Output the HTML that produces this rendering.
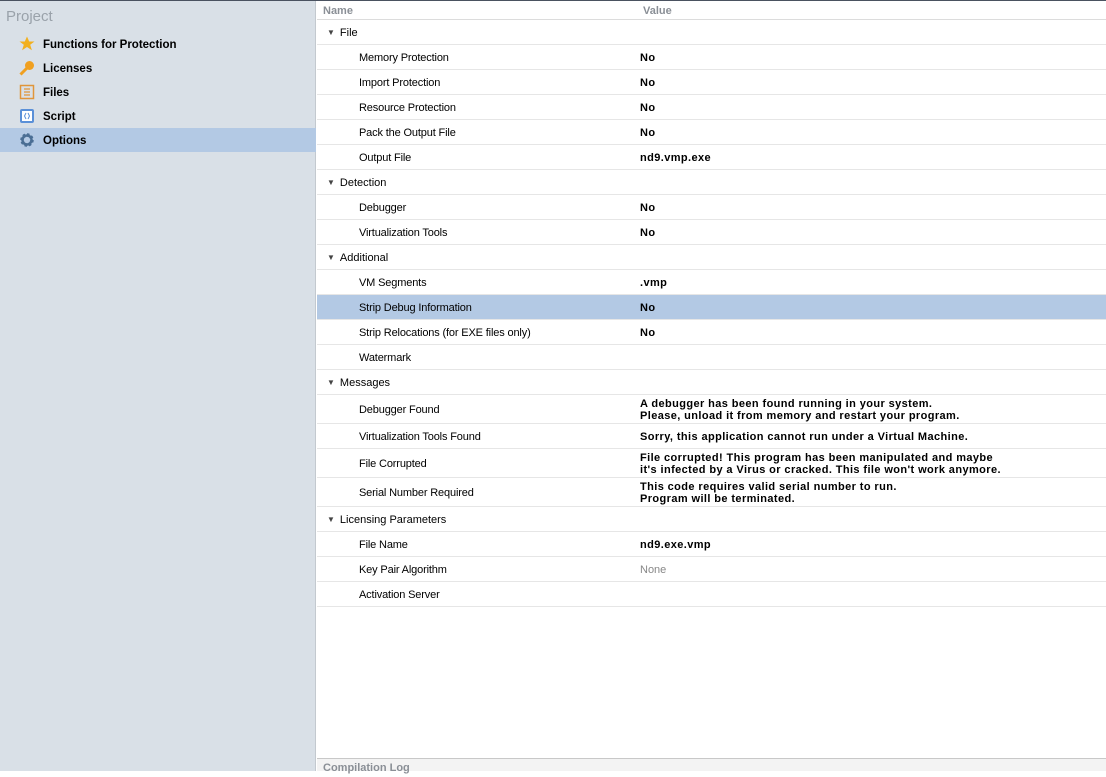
<!DOCTYPE html>
<html><head><style>
*{margin:0;padding:0;box-sizing:border-box}
body{width:1106px;height:771px;overflow:hidden;font-family:"Liberation Sans",sans-serif;font-size:11px;color:#000;background:#fff;position:relative}
#top{position:absolute;left:0;top:0;width:1106px;height:1px;background:#4a5260}
#left{position:absolute;left:0;top:1px;width:316px;height:770px;background:#d9e0e7;border-right:1px solid #c3c9cf}
#left .t{position:absolute;left:6px;top:7px;font-size:15px;color:#9aa2aa;font-family:"Liberation Sans",sans-serif}
.it{position:absolute;left:0;width:316px;height:24px;font-weight:bold;font-size:11.5px;line-height:26px;padding-left:43px}
.it svg{position:absolute;left:19px;top:4px}
.sel{background:#b3c9e4}
#right{position:absolute;left:317px;top:1px;width:789px;height:757px}
.hdr{position:absolute;top:0;left:0;width:789px;height:19px;border-bottom:1px solid #dcdcdc;color:#8a8f96;font-weight:bold;font-size:11px;line-height:20px}
.row{position:absolute;left:0;width:789px;border-bottom:1px solid #e6e6e6;line-height:12px}
.row .n{position:absolute;left:42px;top:1px;height:100%;display:flex;align-items:center;letter-spacing:-0.15px}
.row .v{position:absolute;left:323px;top:1px;height:100%;display:flex;align-items:center;font-weight:bold;line-height:12px;letter-spacing:0.4px}
.row .g{position:absolute;left:10px;top:1px;height:100%;display:flex;align-items:center}
.row .g b{font-weight:normal;font-size:8px;color:#444;margin-right:5px}
#bot{position:absolute;left:317px;top:758px;width:789px;height:13px;background:#f3f3f3;border-top:1px solid #c8c8c8;color:#8a8f96;font-weight:bold;font-size:11px;padding-left:6px;line-height:18px}
</style></head><body>
<div id="top"></div>
<div id="left">
<div class="t">Project</div>
<div class="it" style="top:31px"><svg width="16" height="16" viewBox="0 0 16 16"><path d="M8 0.5l2.2 5h5.3l-4.3 3.3 1.7 5.5L8 11l-4.9 3.3 1.7-5.5L0.5 5.5h5.3z" fill="#f2b01e"/></svg>Functions for Protection</div>
<div class="it" style="top:55px"><svg width="16" height="16" viewBox="0 0 16 16"><circle cx="10.5" cy="5.5" r="4.5" fill="#f0a020"/><path d="M8 8L1.5 14.5" stroke="#f0a020" stroke-width="3"/></svg>Licenses</div>
<div class="it" style="top:79px"><svg width="16" height="16" viewBox="0 0 16 16"><rect x="1.5" y="1.5" width="13" height="13" fill="none" stroke="#e0953a" stroke-width="1.5"/><path d="M5 5h6M5 8h6M5 11h6" stroke="#e0953a" stroke-width="1.3"/></svg>Files</div>
<div class="it" style="top:103px"><svg width="16" height="16" viewBox="0 0 16 16"><rect x="1" y="1" width="14" height="14" rx="2" fill="#5a90d8"/><rect x="3" y="3" width="10" height="10" fill="#fff"/><path d="M7 5L5.5 8 7 11M9 5l1.5 3L9 11" stroke="#5a90d8" fill="none"/></svg>Script</div>
<div class="it sel" style="top:127px"><svg width="16" height="16" viewBox="0 0 16 16"><circle cx="8" cy="8" r="5" fill="none" stroke="#4a6e94" stroke-width="3.5" stroke-dasharray="2.2 1.7"/><circle cx="8" cy="8" r="4.5" fill="none" stroke="#4a6e94" stroke-width="2.5"/></svg>Options</div>
</div>
<div id="right">
<div class="hdr"><span style="position:absolute;left:6px">Name</span><span style="position:absolute;left:326px">Value</span></div>
<div class="row" style="top:19px;height:25px"><div class="g"><b>▼</b>File</div></div>
<div class="row" style="top:44px;height:25px"><div class="n">Memory Protection</div><div class="v">No</div></div>
<div class="row" style="top:69px;height:25px"><div class="n">Import Protection</div><div class="v">No</div></div>
<div class="row" style="top:94px;height:25px"><div class="n">Resource Protection</div><div class="v">No</div></div>
<div class="row" style="top:119px;height:25px"><div class="n">Pack the Output File</div><div class="v">No</div></div>
<div class="row" style="top:144px;height:25px"><div class="n">Output File</div><div class="v">nd9.vmp.exe</div></div>
<div class="row" style="top:169px;height:25px"><div class="g"><b>▼</b>Detection</div></div>
<div class="row" style="top:194px;height:25px"><div class="n">Debugger</div><div class="v">No</div></div>
<div class="row" style="top:219px;height:25px"><div class="n">Virtualization Tools</div><div class="v">No</div></div>
<div class="row" style="top:244px;height:25px"><div class="g"><b>▼</b>Additional</div></div>
<div class="row" style="top:269px;height:25px"><div class="n">VM Segments</div><div class="v">.vmp</div></div>
<div class="row sel" style="top:294px;height:25px"><div class="n">Strip Debug Information</div><div class="v">No</div></div>
<div class="row" style="top:319px;height:25px"><div class="n">Strip Relocations (for EXE files only)</div><div class="v">No</div></div>
<div class="row" style="top:344px;height:25px"><div class="n">Watermark</div></div>
<div class="row" style="top:369px;height:25px"><div class="g"><b>▼</b>Messages</div></div>
<div class="row" style="top:394px;height:29px"><div class="n">Debugger Found</div><div class="v">A debugger has been found running in your system.<br>Please, unload it from memory and restart your program.</div></div>
<div class="row" style="top:423px;height:25px"><div class="n">Virtualization Tools Found</div><div class="v">Sorry, this application cannot run under a Virtual Machine.</div></div>
<div class="row" style="top:448px;height:29px"><div class="n">File Corrupted</div><div class="v">File corrupted! This program has been manipulated and maybe<br>it's infected by a Virus or cracked. This file won't work anymore.</div></div>
<div class="row" style="top:477px;height:29px"><div class="n">Serial Number Required</div><div class="v">This code requires valid serial number to run.<br>Program will be terminated.</div></div>
<div class="row" style="top:506px;height:25px"><div class="g"><b>▼</b>Licensing Parameters</div></div>
<div class="row" style="top:531px;height:25px"><div class="n">File Name</div><div class="v">nd9.exe.vmp</div></div>
<div class="row" style="top:556px;height:25px"><div class="n">Key Pair Algorithm</div><div class="v" style="font-weight:normal;color:#888;letter-spacing:0">None</div></div>
<div class="row" style="top:581px;height:25px"><div class="n">Activation Server</div></div>
</div>
<div id="bot">Compilation Log</div>
</body></html>
